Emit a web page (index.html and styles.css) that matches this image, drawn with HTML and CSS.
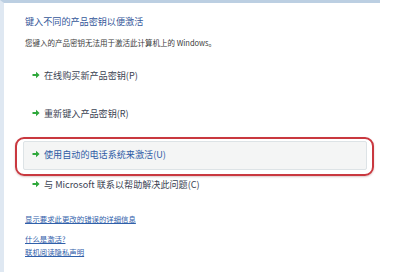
FILE: index.html
```html
<!DOCTYPE html>
<html lang="zh-CN">
<head>
<meta charset="utf-8">
<link rel="stylesheet" href="styles.css">
</head>
<body>
<div class="window">
  <div class="content">
    <div class="title">键入不同的产品密钥以便激活</div>
    <div class="desc">您键入的产品密钥无法用于激活此计算机上的 Windows。</div>

    <div class="option first">
      <svg class="arrow" viewBox="0 0 8 8" width="8" height="8"><path d="M0.5 3h3.5V0.8L7.6 4 4 7.2V5H0.5z" fill="#2fa83c"/></svg>
      <span>在线购买新产品密钥(P)</span>
    </div>
    <div class="option second">
      <svg class="arrow" viewBox="0 0 8 8" width="8" height="8"><path d="M0.5 3h3.5V0.8L7.6 4 4 7.2V5H0.5z" fill="#2fa83c"/></svg>
      <span>重新键入产品密钥(R)</span>
    </div>

    <div class="ring">
      <div class="option hot">
        <svg class="arrow" viewBox="0 0 8 8" width="8" height="8"><path d="M0.5 3h3.5V0.8L7.6 4 4 7.2V5H0.5z" fill="#2fa83c"/></svg>
        <span>使用自动的电话系统来激活(U)</span>
      </div>
    </div>

    <div class="option fourth">
      <svg class="arrow" viewBox="0 0 8 8" width="8" height="8"><path d="M0.5 3h3.5V0.8L7.6 4 4 7.2V5H0.5z" fill="#2fa83c"/></svg>
      <span>与 Microsoft 联系以帮助解决此问题(C)</span>
    </div>

    <a class="link l1">显示要求此更改的错误的详细信息</a>
    <a class="link l2">什么是激活?</a>
    <a class="link l3">联机阅读隐私声明</a>
  </div>
</div>
</body>
</html>
```

FILE: styles.css
```css
html, body {
  margin: 0;
  padding: 0;
  background: #ffffff;
}

body {
  font-family: "Noto Sans CJK SC", "Noto Sans", "Liberation Sans", sans-serif;
  width: 396px;
  height: 272px;
  overflow: hidden;
}

.window {
  width: 380px;
  height: 272px;
  box-sizing: border-box;
  border-top: 3px solid #bccfe2;
  border-left: 4px solid #dfe8f2;
}

.content {
  display: flex;
  flex-direction: column;
  align-items: flex-start;
  padding: 11px 0 0 21px;
}

.title {
  font-size: 9.1px;
  line-height: 14px;
  color: #34579a;
}

.desc {
  margin-top: 9px;
  font-size: 7.5px;
  line-height: 12px;
  color: #3a3a3a;
}

.option {
  display: flex;
  align-items: center;
  gap: 4px;
  font-size: 9.1px;
  line-height: 12px;
  color: #3a4252;
  padding-left: 7px;
}

.arrow {
  flex: none;
}

.option.first { margin-top: 20px; }
.option.second { margin-top: 26px; }
.option.fourth { margin-top: 2px; }

.ring {
  margin-top: 18px;
  margin-left: -10px;
  width: 359px;
  box-sizing: border-box;
  border: 2px solid #c9383f;
  border-radius: 9px;
  padding: 2px 5px 4px 6px;
  box-shadow: 0 1px 2px rgba(120, 40, 40, 0.25);
  display: flex;
}

.option.hot {
  flex: 1;
  background: #f4f5f5;
  border: 1px solid #dde3e6;
  border-radius: 2px;
  padding: 6px 0 9px 8px;
  color: #2f5ca5;
}

.link {
  font-size: 7.4px;
  line-height: 11px;
  color: #3060aa;
  text-decoration: underline;
}

.link.l1 { margin-top: 23px; }
.link.l2 { margin-top: 9px; }
.link.l3 { margin-top: 2px; }
```
